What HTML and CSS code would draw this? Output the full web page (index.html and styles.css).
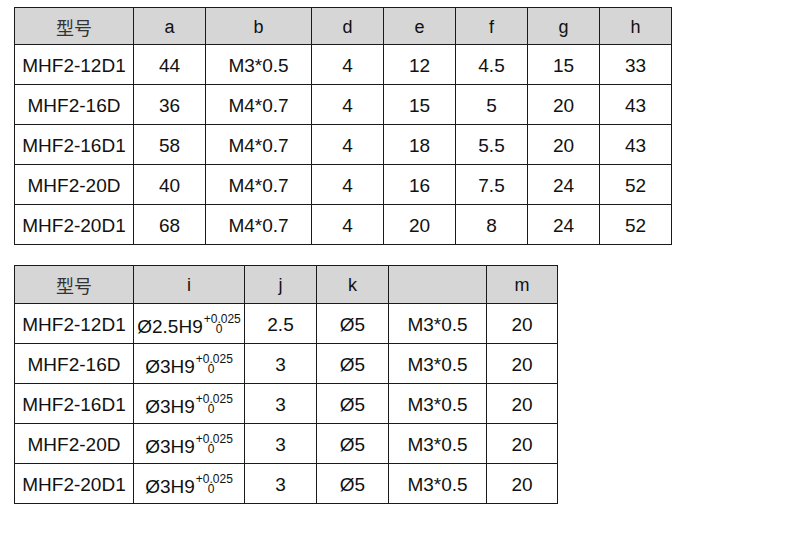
FILE: index.html
```html
<!DOCTYPE html>
<html lang="zh">
<head>
<meta charset="utf-8">
<title>MHF2</title>
<link rel="stylesheet" href="styles.css">
</head>
<body>
<div class="page">
  <div class="grid t1">
    <div class="c h cjk">型号</div><div class="c h">a</div><div class="c h">b</div><div class="c h">d</div><div class="c h">e</div><div class="c h">f</div><div class="c h">g</div><div class="c h">h</div>
    <div class="c">MHF2-12D1</div><div class="c">44</div><div class="c">M3*0.5</div><div class="c">4</div><div class="c">12</div><div class="c">4.5</div><div class="c">15</div><div class="c">33</div>
    <div class="c">MHF2-16D</div><div class="c">36</div><div class="c">M4*0.7</div><div class="c">4</div><div class="c">15</div><div class="c">5</div><div class="c">20</div><div class="c">43</div>
    <div class="c">MHF2-16D1</div><div class="c">58</div><div class="c">M4*0.7</div><div class="c">4</div><div class="c">18</div><div class="c">5.5</div><div class="c">20</div><div class="c">43</div>
    <div class="c">MHF2-20D</div><div class="c">40</div><div class="c">M4*0.7</div><div class="c">4</div><div class="c">16</div><div class="c">7.5</div><div class="c">24</div><div class="c">52</div>
    <div class="c">MHF2-20D1</div><div class="c">68</div><div class="c">M4*0.7</div><div class="c">4</div><div class="c">20</div><div class="c">8</div><div class="c">24</div><div class="c">52</div>
  </div>

  <div class="grid t2">
    <div class="c h cjk">型号</div><div class="c h">i</div><div class="c h">j</div><div class="c h">k</div><div class="c h"></div><div class="c h">m</div>
    <div class="c">MHF2-12D1</div><div class="c"><span class="tol"><span class="main">Ø2.5H9</span><span class="stack"><span class="up">+0.025</span><span class="lo">0</span></span></span></div><div class="c">2.5</div><div class="c">Ø5</div><div class="c">M3*0.5</div><div class="c">20</div>
    <div class="c">MHF2-16D</div><div class="c"><span class="tol"><span class="main">Ø3H9</span><span class="stack"><span class="up">+0.025</span><span class="lo">0</span></span></span></div><div class="c">3</div><div class="c">Ø5</div><div class="c">M3*0.5</div><div class="c">20</div>
    <div class="c">MHF2-16D1</div><div class="c"><span class="tol"><span class="main">Ø3H9</span><span class="stack"><span class="up">+0.025</span><span class="lo">0</span></span></span></div><div class="c">3</div><div class="c">Ø5</div><div class="c">M3*0.5</div><div class="c">20</div>
    <div class="c">MHF2-20D</div><div class="c"><span class="tol"><span class="main">Ø3H9</span><span class="stack"><span class="up">+0.025</span><span class="lo">0</span></span></span></div><div class="c">3</div><div class="c">Ø5</div><div class="c">M3*0.5</div><div class="c">20</div>
    <div class="c">MHF2-20D1</div><div class="c"><span class="tol"><span class="main">Ø3H9</span><span class="stack"><span class="up">+0.025</span><span class="lo">0</span></span></span></div><div class="c">3</div><div class="c">Ø5</div><div class="c">M3*0.5</div><div class="c">20</div>
  </div>
</div>
</body>
</html>
```

FILE: styles.css
```css
html, body {
  margin: 0;
  padding: 0;
  background: #ffffff;
}

.page {
  padding: 7px 0 0 14px;
  font-family: "Liberation Sans", Arial, sans-serif;
  font-size: 19px;
  color: #111111;
}

.grid {
  display: grid;
  width: max-content;
  border-top: 1px solid #1a1a1a;
  border-left: 1px solid #1a1a1a;
}

.t1 {
  grid-template-columns: 119px 72px 106px 72px 72px 72px 72px 72px;
  grid-template-rows: 37px repeat(5, 40px);
}

.t2 {
  margin-top: 20px;
  grid-template-columns: 119px 111px 72px 72px 98px 71px;
  grid-template-rows: 38px repeat(5, 40px);
}

.c {
  box-sizing: border-box;
  border-right: 1px solid #1a1a1a;
  border-bottom: 1px solid #1a1a1a;
  display: flex;
  align-items: center;
  justify-content: center;
  padding-top: 2px;
  white-space: nowrap;
  line-height: 1;
}

.h {
  background: #d6d6d6;
  font-size: 18px;
  padding-top: 1px;
}

.cjk {
  font-family: "Noto Sans CJK SC", "Liberation Sans", sans-serif;
  font-size: 18px;
  color: #333333;
}

.tol {
  display: inline-flex;
  align-items: flex-end;
}

.main {
  line-height: 19px;
}

.stack {
  display: flex;
  flex-direction: column;
  font-size: 12px;
  line-height: 10px;
  margin-left: 1px;
  margin-bottom: 2px;
}

.lo {
  padding-left: 12px;
}
```
